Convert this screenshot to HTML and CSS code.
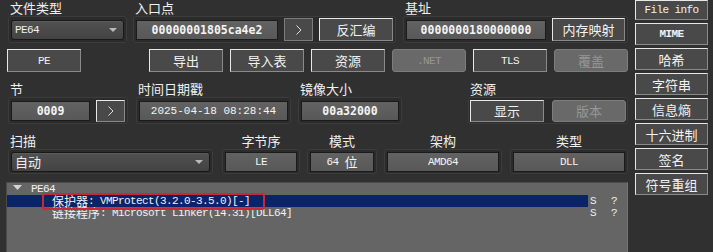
FILE: index.html
```html
<!DOCTYPE html>
<html>
<head>
<meta charset="utf-8">
<title>PE</title>
<link rel="stylesheet" href="styles.css">
</head>
<body>
<div class="app">
  <div class="main">
    <div class="row r1">
      <div class="grp w119">
        <div class="lbl">文件类型</div>
        <div class="box">
          <div class="combo"><span class="mono">PE64</span><svg class="caret" width="8" height="4" viewBox="0 0 8 4"><polygon points="0,0 8,0 4,4" fill="#b9b9b9"/></svg></div>
        </div>
      </div>
      <div class="grp w263 ml6">
        <div class="lbl">入口点</div>
        <div class="box">
          <div class="field bold">00000001805ca4e2</div>
          <button class="btn flat sq"><svg width="6" height="10" viewBox="0 0 6 10"><polyline points="0.5,0.5 5,5 0.5,9.5" fill="none" stroke="#dedede" stroke-width="1"/></svg></button>
          <button class="btn">反汇编</button>
        </div>
      </div>
      <div class="grp w225 ml7">
        <div class="lbl">基址</div>
        <div class="box">
          <div class="field bold">0000000180000000</div>
          <button class="btn w73">内存映射</button>
        </div>
      </div>
    </div>

    <div class="row r2">
      <button class="btn mono">PE</button>
      <button class="btn push">导出</button>
      <button class="btn">导入表</button>
      <button class="btn">资源</button>
      <button class="btn dis mono">.NET</button>
      <button class="btn mono">TLS</button>
      <button class="btn dis">覆盖</button>
    </div>

    <div class="row r3">
      <div class="grp w120">
        <div class="lbl">节</div>
        <div class="box">
          <div class="field bold">0009</div>
          <button class="btn sq h22"><svg width="6" height="10" viewBox="0 0 6 10"><polyline points="0.5,0.5 5,5 0.5,9.5" fill="none" stroke="#dedede" stroke-width="1"/></svg></button>
        </div>
      </div>
      <div class="grp w155 ml8">
        <div class="lbl">时间日期戳</div>
        <div class="box">
          <div class="field date">2025-04-18 08:28:44</div>
        </div>
      </div>
      <div class="grp w104 ml7">
        <div class="lbl">镜像大小</div>
        <div class="box">
          <div class="field bold">00a32000</div>
        </div>
      </div>
      <div class="grp w160 ml66">
        <div class="lbl">资源</div>
        <div class="box tight">
          <button class="btn h22">显示</button>
          <button class="btn dis h22">版本</button>
        </div>
      </div>
    </div>

    <div class="row r4">
      <div class="grp w205">
        <div class="lbl">扫描</div>
        <div class="box short">
          <div class="combo"><span>自动</span><svg class="caret" width="8" height="4" viewBox="0 0 8 4"><polygon points="0,0 8,0 4,4" fill="#b9b9b9"/></svg></div>
        </div>
      </div>
      <div class="grp w78 ml9">
        <div class="lbl c">字节序</div>
        <div class="box short"><div class="field">LE</div></div>
      </div>
      <div class="grp w70 ml7">
        <div class="lbl c">模式</div>
        <div class="box short"><div class="field">64 <span class="cjk">位</span></div></div>
      </div>
      <div class="grp w118 ml7">
        <div class="lbl c">架构</div>
        <div class="box short"><div class="field">AMD64</div></div>
      </div>
      <div class="grp w118 ml8">
        <div class="lbl c">类型</div>
        <div class="box short"><div class="field">DLL</div></div>
      </div>
    </div>

    <div class="tree">
      <div class="trow">
        <div class="tname root"><svg class="tarrow" width="9" height="5" viewBox="0 0 9 5"><polygon points="0,0 9,0 4.5,5" fill="#d4d4d4"/></svg>PE64</div>
      </div>
      <div class="trow sel">
        <div class="tname child"><span class="mark"><span class="tcjk">保护器</span>: VMProtect(3.2.0-3.5.0)[-]</span></div>
        <div class="tc1">S</div>
        <div class="tc2">?</div>
      </div>
      <div class="trow">
        <div class="tname child"><span class="tcjk">链接程序</span>: Microsoft Linker(14.31)[DLL64]</div>
        <div class="tc1">S</div>
        <div class="tc2">?</div>
      </div>
    </div>
  </div>

  <div class="side">
    <button class="btn sbtn first mono">File info</button>
    <button class="btn sbtn mono b">MIME</button>
    <button class="btn sbtn">哈希</button>
    <button class="btn sbtn">字符串</button>
    <button class="btn sbtn">信息熵</button>
    <button class="btn sbtn">十六进制</button>
    <button class="btn sbtn">签名</button>
    <button class="btn sbtn">符号重组</button>
  </div>
</div>
</body>
</html>
```

FILE: styles.css
```css
* { box-sizing: border-box; }
html, body { margin: 0; padding: 0; }
body {
  width: 713px;
  height: 252px;
  overflow: hidden;
  background: #303030;
  color: #efefef;
  font-family: "Noto Sans CJK SC", "Noto Sans", sans-serif;
  font-size: 13px;
}
.app { display: flex; align-items: flex-start; }
.main { width: 629px; padding-left: 6px; display: flex; flex-direction: column; }
.side { margin-left: 6px; width: 73px; display: flex; flex-direction: column; gap: 3px; }

.row { display: flex; }
.r1 { margin-left: 2px; }
.r2 { margin-top: 6px; margin-left: 1px; gap: 7px; }
.r3 { margin-top: 9px; margin-left: 2px; }
.r4 { margin-top: 9px; margin-left: 2px; }

.grp { display: flex; flex-direction: column; }
.w70 { width: 70px; } .w78 { width: 78px; } .w104 { width: 104px; }
.w118 { width: 118px; } .w119 { width: 119px; } .w120 { width: 120px; }
.w155 { width: 155px; } .w160 { width: 160px; } .w205 { width: 205px; }
.w225 { width: 225px; } .w263 { width: 263px; }
.ml6 { margin-left: 6px; } .ml7 { margin-left: 7px; } .ml8 { margin-left: 8px; }
.ml9 { margin-left: 9px; } .ml66 { margin-left: 66px; }

.lbl {
  height: 16px;
  line-height: 16px;
  padding-left: 2px;
  white-space: nowrap;
  color: #f0f0f0;
}
.lbl.c { text-align: center; padding-left: 0; }

.box {
  height: 27px;
  border: 1px solid #3c3c3c;
  border-radius: 3px;
  background: #2b2b2b;
  display: flex;
  align-items: center;
  padding: 0 2px;
  gap: 6px;
}
.box.short { height: 25px; }
.box.tight { padding: 0 1px; gap: 8px; }

.mono {
  font-family: "Liberation Mono", monospace;
  font-size: 11px;
  letter-spacing: -0.6px;
}
.b { font-weight: bold; }
.cjk { font-family: "Noto Sans CJK SC", sans-serif; font-size: 13px; letter-spacing: 0; }

.combo {
  flex: 1;
  height: 20px;
  border: 1px solid #181818;
  border-radius: 3px;
  background: linear-gradient(#515151, #434343);
  box-shadow: inset 0 1px 0 #5c5c5c;
  display: flex;
  align-items: center;
  justify-content: space-between;
  padding: 0 6px 0 3px;
  color: #f0f0f0;
  white-space: nowrap;
}
.caret { display: block; }

.field {
  flex: 1;
  min-width: 0;
  height: 20px;
  border: 1px solid #1b1b1b;
  background: linear-gradient(#626262, #585858);
  display: flex;
  align-items: center;
  justify-content: center;
  color: #f4f4f4;
  font-family: "Liberation Mono", "Noto Sans CJK SC", monospace;
  font-size: 11px;
  letter-spacing: -0.6px;
  white-space: pre;
}
.field.bold {
  font-family: "DejaVu Sans Mono", monospace;
  font-weight: bold;
  font-size: 11.5px;
  letter-spacing: 0;
}
.field.date { letter-spacing: 0; }

.btn {
  width: 74px;
  height: 23px;
  flex: none;
  margin: 0;
  padding: 0;
  border: 1px solid;
  border-color: #e8e8e8 #8a8a8a #8a8a8a #e8e8e8;
  background: #494949;
  color: #f2f2f2;
  font-family: "Noto Sans CJK SC", sans-serif;
  font-size: 13px;
  display: flex;
  align-items: center;
  justify-content: center;
  white-space: nowrap;
}
.r2 .btn.push { margin-left: 61px; }
.btn.mono { font-family: "Liberation Mono", monospace; font-size: 11px; letter-spacing: -0.6px; }
.btn.b { font-weight: bold; }
.btn.w73 { width: 73px; }
.btn.h22 { height: 22px; }
.btn.sq { width: 29px; }
.btn.flat { border-color: #7c7c7c; }
.btn.dis {
  background: #696969;
  border-color: #7d7d7d;
  border-radius: 3px;
  color: #969696;
}
.btn svg { display: block; }

.sbtn { width: 73px; height: 22px; }
.sbtn.first { height: 20px; }

.tree {
  margin-top: 8px;
  width: 622px;
  height: 80px;
  background: #656565;
  border-top: 1px solid #4b4b4b;
  border-left: 1px solid #4b4b4b;
  border-right: 1px solid #747474;
}
.trow {
  display: flex;
  height: 12px;
  line-height: 12px;
  font-family: "Liberation Mono", monospace;
  font-size: 11px;
  letter-spacing: -0.6px;
  color: #f2f2f2;
  white-space: pre;
}
.tname { width: 581px; height: 12px; line-height: 12px; }
.tname.root { padding-left: 6px; }
.tname.child { padding-left: 45px; }
.tarrow { display: inline-block; vertical-align: 2px; margin-right: 9px; }
.trow.sel .tname { background: #0a246a; }
.tc1 { width: 21px; padding-left: 2px; }
.tc2 { padding-left: 2px; }
.tcjk {
  font-family: "Noto Sans CJK SC", sans-serif;
  font-size: 12px;
  letter-spacing: 0;
  line-height: 12px;
  vertical-align: top;
}
.mark {
  position: relative;
  display: inline-block;
  height: 12px;
  line-height: 12px;
  vertical-align: top;
}
.mark::after {
  content: "";
  position: absolute;
  left: -10px;
  right: -15px;
  top: -2px;
  bottom: -3px;
  border: 2px solid #c9283a;
  border-radius: 3px;
}
```
